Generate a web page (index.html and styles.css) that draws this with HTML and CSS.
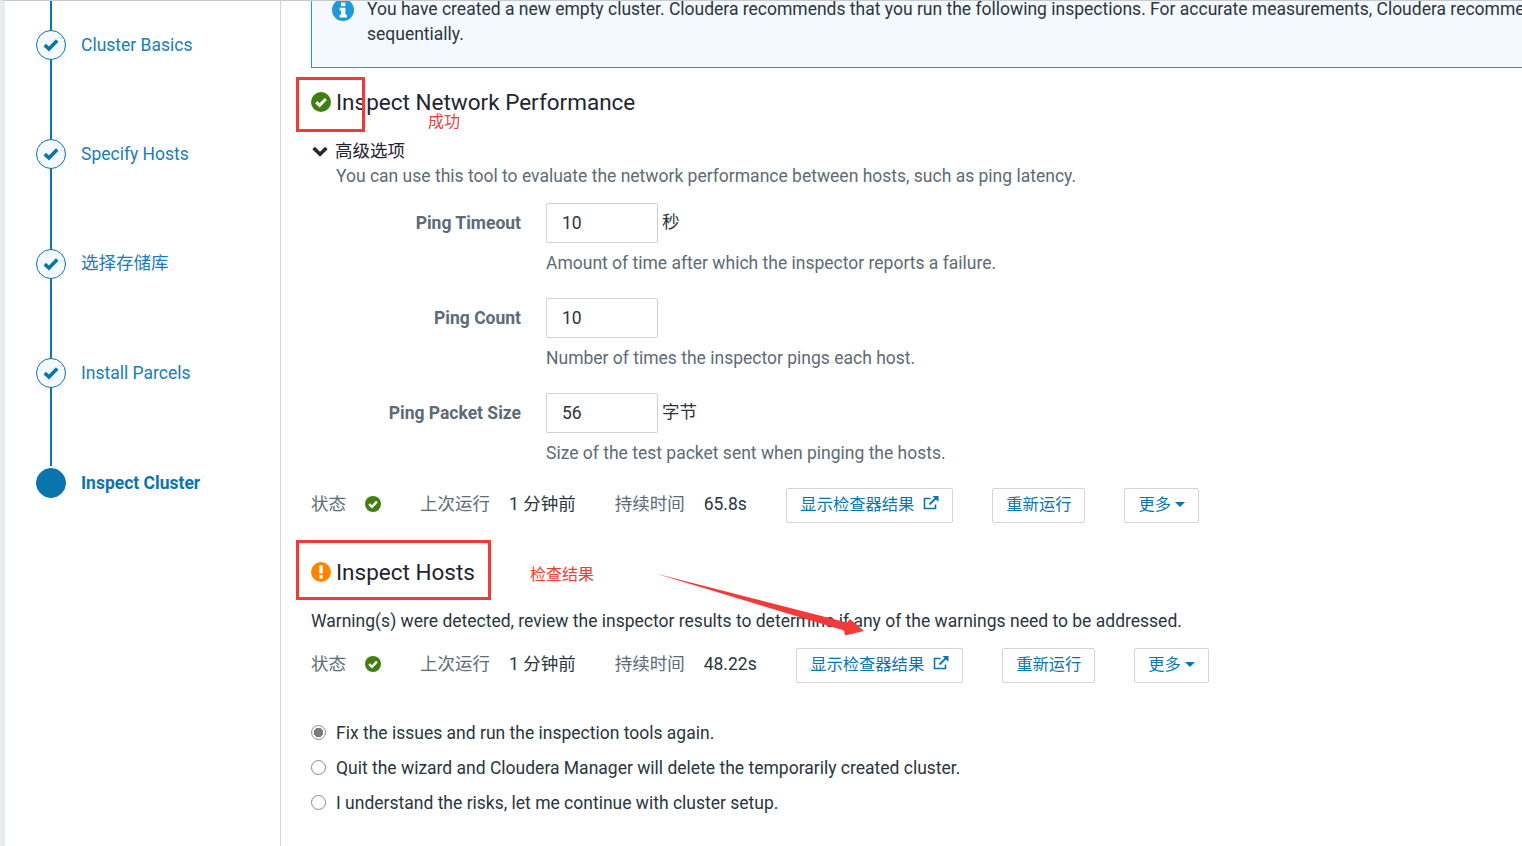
FILE: index.html
```html
<!DOCTYPE html>
<html lang="en">
<head>
<meta charset="utf-8">
<title>Inspect Cluster</title>
<link rel="stylesheet" href="styles.css">
</head>
<body>
<div class="page">
  <nav class="sidebar">
    <ol class="steps">
      <li class="step"><span class="dot"><svg viewBox="0 0 16 14" class="tick"><path d="M1.8 7.2 6 11 14.2 2.6"/></svg></span><a class="step-label">Cluster Basics</a></li>
      <li class="step"><span class="dot"><svg viewBox="0 0 16 14" class="tick"><path d="M1.8 7.2 6 11 14.2 2.6"/></svg></span><a class="step-label">Specify Hosts</a></li>
      <li class="step"><span class="dot"><svg viewBox="0 0 16 14" class="tick"><path d="M1.8 7.2 6 11 14.2 2.6"/></svg></span><a class="step-label step-label-cjk">选择存储库</a></li>
      <li class="step"><span class="dot"><svg viewBox="0 0 16 14" class="tick"><path d="M1.8 7.2 6 11 14.2 2.6"/></svg></span><a class="step-label">Install Parcels</a></li>
      <li class="step step-current"><span class="dot"></span><a class="step-label">Inspect Cluster</a></li>
    </ol>
  </nav>
  <main class="content">
    <div class="alert">
      <svg class="alert-icon" viewBox="0 0 22 22"><circle cx="11" cy="11" r="11" fill="#1f9ad6"/><rect x="9" y="3.5" width="4.4" height="3.6" fill="#fff"/><path d="M7.6 8.8h5.8v7h1.6v2.6H7.6v-2.6h1.5v-4.4H7.6z" fill="#fff"/></svg>
      <p class="alert-text">You have created a new empty cluster. Cloudera recommends that you run the following inspections. For accurate measurements, Cloudera recommends running them<br>sequentially.</p>
    </div>

    <h2 class="title title-first"><svg class="status-lg" viewBox="0 0 20 20"><circle cx="10" cy="10" r="10" fill="#3f7f10"/><path d="M5.2 10.2 8.6 13.4 14.8 7" fill="none" stroke="#fff" stroke-width="3"/></svg>Inspect Network Performance</h2>
    <div class="advanced"><svg class="chevron" viewBox="0 0 16 11"><path d="M1.6 2 8 8.2 14.4 2" fill="none" stroke="#1f2933" stroke-width="3.6"/></svg>高级选项</div>
    <p class="desc">You can use this tool to evaluate the network performance between hosts, such as ping latency.</p>

    <div class="field">
      <label class="field-label">Ping Timeout</label>
      <div class="field-body">
        <div class="field-input"><span class="input">10</span><span class="suffix">秒</span></div>
        <p class="help">Amount of time after which the inspector reports a failure.</p>
      </div>
    </div>
    <div class="field">
      <label class="field-label">Ping Count</label>
      <div class="field-body">
        <div class="field-input"><span class="input">10</span></div>
        <p class="help">Number of times the inspector pings each host.</p>
      </div>
    </div>
    <div class="field">
      <label class="field-label">Ping Packet Size</label>
      <div class="field-body">
        <div class="field-input"><span class="input">56</span><span class="suffix">字节</span></div>
        <p class="help">Size of the test packet sent when pinging the hosts.</p>
      </div>
    </div>

    <div class="status-row status-row-first">
      <span class="key">状态</span>
      <svg class="status-sm" viewBox="0 0 16 16"><circle cx="8" cy="8" r="8" fill="#3f7f10"/><path d="M4 8.2 6.9 10.8 12 5.6" fill="none" stroke="#fff" stroke-width="2.4"/></svg>
      <span class="key key-run">上次运行</span>
      <span class="val">1 分钟前</span>
      <span class="key key-dur">持续时间</span>
      <span class="val">65.8s</span>
      <a class="btn">显示检查器结果<svg class="ext" viewBox="0 0 16 16"><path d="M12.5 9.5v4h-11v-10h6" fill="none" stroke="#0a75ad" stroke-width="1.6"/><path d="M6.5 9.5 13 3" fill="none" stroke="#0a75ad" stroke-width="1.8"/><path d="M9.5 1h6v6z" fill="#0a75ad"/></svg></a>
      <a class="btn">重新运行</a>
      <a class="btn">更多<span class="caret"></span></a>
    </div>

    <h2 class="title title-second"><svg class="status-lg" viewBox="0 0 20 20"><circle cx="10" cy="10" r="10" fill="#ff8400"/><rect x="8.3" y="3.6" width="3.4" height="8" rx=".6" fill="#fff"/><rect x="8.3" y="13" width="3.4" height="3.4" rx=".6" fill="#fff"/></svg>Inspect Hosts</h2>
    <p class="warning">Warning(s) were detected, review the inspector results to determine if any of the warnings need to be addressed.</p>

    <div class="status-row status-row-second">
      <span class="key">状态</span>
      <svg class="status-sm" viewBox="0 0 16 16"><circle cx="8" cy="8" r="8" fill="#3f7f10"/><path d="M4 8.2 6.9 10.8 12 5.6" fill="none" stroke="#fff" stroke-width="2.4"/></svg>
      <span class="key key-run">上次运行</span>
      <span class="val">1 分钟前</span>
      <span class="key key-dur">持续时间</span>
      <span class="val">48.22s</span>
      <a class="btn">显示检查器结果<svg class="ext" viewBox="0 0 16 16"><path d="M12.5 9.5v4h-11v-10h6" fill="none" stroke="#0a75ad" stroke-width="1.6"/><path d="M6.5 9.5 13 3" fill="none" stroke="#0a75ad" stroke-width="1.8"/><path d="M9.5 1h6v6z" fill="#0a75ad"/></svg></a>
      <a class="btn">重新运行</a>
      <a class="btn">更多<span class="caret"></span></a>
    </div>

    <div class="choices">
      <label class="choice"><span class="radio radio-on"></span>Fix the issues and run the inspection tools again.</label>
      <label class="choice"><span class="radio"></span>Quit the wizard and Cloudera Manager will delete the temporarily created cluster.</label>
      <label class="choice"><span class="radio"></span>I understand the risks, let me continue with cluster setup.</label>
    </div>
  </main>
</div>

<div class="mark mark-success"></div>
<div class="mark mark-hosts"></div>
<span class="note note-success">成功</span>
<span class="note note-hosts">检查结果</span>
<svg class="arrow" viewBox="0 0 1522 846"><polygon points="655.5,573.5 847,622.5 850,619 864,631 845,635.5 844,630.5" fill="#f33a3a"/></svg>
</body>
</html>
```
FILE: styles.css
```css
* { box-sizing: border-box; }
html, body { margin: 0; height: 100%; overflow: hidden; background: #fff; }
body {
  font-family: Roboto, "Noto Sans CJK SC", sans-serif;
  font-size: 17.5px;
  color: #2b3540;
}
p, h2, ol { margin: 0; padding: 0; }

.page {
  display: flex;
  height: 846px;
  border-top: 1px solid #c9c9c9;
  border-left: 5px solid #e9ecef;
  overflow: hidden;
}

.sidebar {
  flex: 0 0 276px;
  border-right: 1px solid #d4d4d4;
}
.steps { list-style: none; position: relative; padding-top: 29px; }
.steps::before {
  content: "";
  position: absolute;
  left: 45px;
  top: 0;
  height: 465px;
  width: 1.5px;
  background: #0a75ad;
}
.step {
  position: relative;
  display: flex;
  align-items: center;
  height: 30px;
  margin-bottom: 79.4px;
  padding-left: 31px;
}
.dot {
  flex: 0 0 30px;
  height: 30px;
  margin-right: 15px;
  border: 1.5px solid #0a75ad;
  border-radius: 50%;
  background: #f3f9fd;
  display: flex;
  align-items: center;
  justify-content: center;
}
.tick { width: 16px; height: 14px; }
.tick path { fill: none; stroke: #0a75ad; stroke-width: 3.6; }
.step-label { color: #1a7db5; line-height: 24px; }
.step-label-cjk { padding-bottom: 2px; }
.step-current .dot { background: #0a75ad; }
.step-current .step-label { font-weight: 700; color: #0a75ad; }

.content { flex: 1; min-width: 0; padding-left: 30px; }

.alert {
  display: flex;
  width: 1400px;
  height: 85px;
  margin-top: -18px;
  padding: 13px 0 0 20px;
  border: 1px solid #1f9ad6;
  background: #f3f9fe;
  line-height: 25px;
  color: #2b3540;
}
.alert-icon { flex: 0 0 22px; height: 22px; margin: 2px 13px 0 0; }
.alert-text { white-space: nowrap; }

.title {
  display: flex;
  align-items: center;
  font-size: 22.5px;
  font-weight: 400;
  line-height: 30px;
  color: #1f2530;
}
.status-lg { flex: 0 0 20px; height: 20px; margin-right: 5px; }
.title-first { margin-top: 19px; }
.title-second { margin-top: 34px; }

.advanced {
  display: flex;
  align-items: center;
  margin-top: 21px;
  line-height: 26px;
  color: #1f2530;
}
.chevron { width: 16px; height: 11px; margin: 0 7px 0 1px; }
.desc { margin: 0 0 0 25px; line-height: 25px; color: #5e6a75; }

.field { display: flex; margin-top: 14px; }
.field + .field { margin-top: 22px; }
.field-label {
  flex: 0 0 210px;
  text-align: right;
  font-weight: 700;
  color: #5e6a75;
  line-height: 40px;
}
.field-body { margin-left: 25px; }
.field-input { display: flex; height: 40px; line-height: 38px; }
.input {
  width: 112px;
  height: 40px;
  padding-left: 15px;
  border: 1px solid #d0d0d0;
  border-radius: 2px;
  color: #2b3540;
}
.suffix { margin-left: 4px; color: #2b3540; }
.help { margin-top: 7px; line-height: 26px; color: #5e6a75; }

.status-row { display: flex; align-items: center; height: 35px; }
.status-row-first { margin-top: 22px; }
.status-row-second { margin-top: 14px; }
.key, .val { line-height: 24px; padding-bottom: 4px; }
.key { color: #5e6a75; }
.val { margin-left: 19px; color: #2b3540; }
.status-sm { flex: 0 0 16px; height: 16px; margin: 0 0 3px 19px; }
.key-run { margin-left: 39px; }
.key-dur { margin-left: 39px; }
.btn {
  display: flex;
  align-items: center;
  height: 35px;
  margin-left: 39px;
  padding: 0 13px 5px;
  border: 1px solid #d4d4d4;
  border-radius: 2px;
  font-size: 16.3px;
  color: #0a75ad;
}
.val + .btn { margin-left: 39.5px; }
.ext { width: 16px; height: 16px; margin-left: 9px; }
.caret {
  width: 0;
  height: 0;
  margin: 3px 0 0 4px;
  border-style: solid;
  border-width: 5.5px 5px 0;
  border-color: #0a75ad transparent transparent;
}

.title-second + .warning { margin-top: 21px; line-height: 26px; color: #2b3540; }

.choices { margin-top: 32px; }
.choice { display: flex; align-items: center; height: 35px; color: #2b3540; }
.radio {
  flex: 0 0 15px;
  height: 15px;
  margin-right: 10px;
  border: 1.5px solid #8a8a8a;
  border-radius: 50%;
  background: #fff;
}
.radio-on { background: radial-gradient(circle, #7d7d7d 0 4.5px, #fff 5px); }

.mark { position: absolute; border: 3px solid #f33a3a; }
.mark-success { left: 296px; top: 77px; width: 69px; height: 55px; }
.mark-hosts { left: 296px; top: 540px; width: 195px; height: 60px; }
.note { position: absolute; font-size: 16px; line-height: 20px; color: #f33a3a; }
.note-success { left: 428px; top: 112px; }
.note-hosts { left: 530px; top: 565px; }
.arrow { position: absolute; left: 0; top: 0; width: 1522px; height: 846px; pointer-events: none; }
```
